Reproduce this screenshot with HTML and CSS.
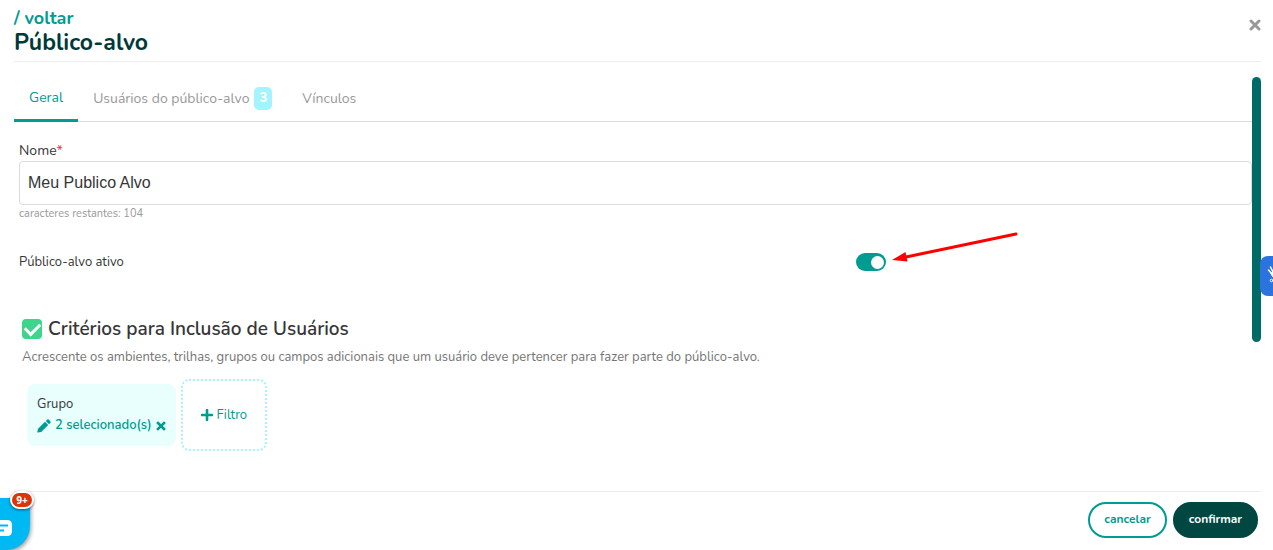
FILE: index.html
```html
<!DOCTYPE html>
<html lang="pt-br">
<head>
    <meta charset="UTF-8">
    <meta name="viewport" content="width=device-width, initial-scale=1.0">
    <title>Público-alvo</title>
    <link rel="stylesheet" href="styles.css">
</head>
<body>
    <div class="modal">
        <header class="modal-header">
            <div>
                <a class="voltar" href="#">/ voltar</a>
                <h1>Público-alvo</h1>
            </div>
            <button class="fechar" type="button" aria-label="Fechar">
                <svg width="12" height="12" viewBox="0 0 12 12"><path d="M2 2l8 8M10 2l-8 8" stroke="currentColor" stroke-width="3" stroke-linecap="round"/></svg>
            </button>
        </header>

        <div class="modal-body">
            <main class="conteudo">
                <nav class="abas">
                    <a class="aba ativa" href="#geral">Geral</a>
                    <a class="aba" href="#usuarios">Usuários do público-alvo <span class="contador">3</span></a>
                    <a class="aba" href="#vinculos">Vínculos</a>
                </nav>

                <form class="formulario" id="geral">
                    <label class="rotulo" for="nome">Nome<span class="obrigatorio">*</span></label>
                    <input class="campo" type="text" id="nome" value="Meu Publico Alvo">
                    <small class="ajuda">caracteres restantes: 104</small>

                    <div class="linha-ativo">
                        <label for="ativo">Público-alvo ativo</label>
                        <div class="controle">
                            <input class="toggle" type="checkbox" id="ativo" checked>
                            <svg class="seta" width="128" height="34" viewBox="0 0 128 34">
                                <path d="M124 4L14 27" stroke="#fe0000" stroke-width="3" stroke-linecap="round"/>
                                <path d="M0 30L13.500 22L15.500 31.500z" fill="#fe0000"/>
                            </svg>
                        </div>
                    </div>

                    <section class="criterios">
                        <div class="titulo">
                            <input class="marcador" type="checkbox" id="criterios" checked>
                            <h2><label for="criterios">Critérios para Inclusão de Usuários</label></h2>
                        </div>
                        <p>Acrescente os ambientes, trilhas, grupos ou campos adicionais que um usuário deve pertencer para fazer parte do público-alvo.</p>
                        <div class="filtros">
                            <div class="filtro">
                                <span>Grupo</span>
                                <div class="selecao">
                                    <button class="editar" type="button">
                                        <svg width="14" height="14" viewBox="0 0 14 14"><path fill="currentColor" d="M8 2.800L11.200 6L4.200 13L.8 13.600Q.2 13.700.3 13.100L1 9.800zM8.800 2L10.300.6Q11 0 11.700.6L13.400 2.300Q14 3 13.400 3.700L12 5.200z"/></svg>
                                        2 selecionado(s)
                                    </button>
                                    <button class="remover" type="button" aria-label="Remover">
                                        <svg width="10" height="10" viewBox="0 0 10 10"><path d="M2 2l6 6M8 2l-6 6" stroke="currentColor" stroke-width="2.600" stroke-linecap="square"/></svg>
                                    </button>
                                </div>
                            </div>
                            <button class="adicionar" type="button">
                                <svg width="12" height="12" viewBox="0 0 12 12"><path d="M6 1v10M1 6h10" stroke="currentColor" stroke-width="2.600" stroke-linecap="round"/></svg>
                                Filtro
                            </button>
                        </div>
                    </section>
                </form>
            </main>
            <div class="rolagem"></div>
        </div>

        <footer class="modal-footer">
            <button class="btn btn-cancelar" type="button">cancelar</button>
            <button class="btn btn-confirmar" type="button">confirmar</button>
        </footer>
    </div>

    <button class="chat" type="button" aria-label="Chat">
        <svg width="13" height="20" viewBox="0 0 13 20"><path d="M0 1h7q5 0 5 5v6q0 5-5 5H0z" fill="#fff"/><path d="M0 6.500h8M0 11.500h4" stroke="#00b9f2" stroke-width="2"/></svg>
        <span class="notificacoes">9+</span>
    </button>

    <button class="libras" type="button" aria-label="Libras">
        <svg width="20" height="24" viewBox="0 0 20 24" fill="none" stroke="#fff" stroke-linecap="round"><path d="M5 10L1.500 6M6 8L3.500 3M8 8L7 1" stroke-width="1.500"/><path d="M4 9L8 7L12 12L10 16L6 13z" fill="#fff"/><circle cx="4.500" cy="16.500" r="1.300"/></svg>
    </button>
</body>
</html>
```

FILE: styles.css
```css
* {
    box-sizing: border-box;
}
body {
    margin: 0;
    font-family: Nunito, 'Open Sans', sans-serif;
    font-size: 14px;
    color: #363636;
    background: #fff;
    overflow: hidden;
}
button {
    font-family: inherit;
    padding: 0;
    border: none;
    background: none;
    color: #009b91;
    cursor: pointer;
}
a {
    text-decoration: none;
}
svg {
    display: block;
    fill: none;
    flex-shrink: 0;
}
.modal {
    display: flex;
    flex-direction: column;
    height: 100vh;
    padding: 0 12px 0 14px;
}
.modal-header {
    display: flex;
    justify-content: space-between;
    align-items: flex-start;
    padding: 6px 0;
    border-bottom: 1px solid #ededed;
}
.voltar {
    display: block;
    font-size: 18px;
    font-weight: 700;
    line-height: 24px;
    color: #009b91;
}
h1 {
    margin: 0;
    font-size: 23px;
    font-weight: 700;
    line-height: 25px;
    color: #003a38;
}
.fechar {
    margin-top: 13px;
    color: #999;
}
.modal-body {
    flex: 1;
    display: flex;
    min-height: 0;
    padding-top: 15px;
}
.conteudo {
    flex: 1;
}
.rolagem {
    width: 9px;
    height: 64%;
    border-radius: 5px;
    background: #006b66;
}

/* abas */
.abas {
    display: flex;
    height: 45px;
    border-bottom: 1px solid #dbdbdb;
}
.aba {
    display: flex;
    align-items: center;
    gap: 5px;
    height: 45px;
    padding: 0 15px 2px;
    color: #999;
}
.aba.ativa {
    color: #009b91;
    border-bottom: 3px solid #009b91;
}
.contador {
    padding: 0 5px;
    border-radius: 5px;
    background: #a3f4ff;
    color: #fff;
    font-size: 13px;
    font-weight: 800;
    line-height: 23px;
}

/* formulario */
.formulario {
    padding: 18px 0 0 5px;
}
.rotulo {
    display: block;
    line-height: 21px;
}
.obrigatorio {
    color: #ff1f4f;
}
.campo {
    display: block;
    width: 100%;
    height: 44px;
    padding: 0 8px;
    border: 1px solid #dbdbdb;
    border-radius: 4px;
    font-family: 'Liberation Sans', Arial, sans-serif;
    font-size: 16px;
    color: #363636;
}
.ajuda {
    display: block;
    font-size: 11px;
    line-height: 18px;
    color: #999;
}
.linha-ativo {
    display: grid;
    grid-template-columns: 2fr 1fr;
    align-items: center;
    margin-top: 30px;
    font-size: 13px;
    line-height: 18px;
}
.controle {
    position: relative;
    display: flex;
    padding-left: 15px;
}
.toggle {
    appearance: none;
    display: flex;
    justify-content: flex-end;
    align-items: center;
    width: 30px;
    height: 18px;
    margin: 0;
    padding: 0 2px;
    border-radius: 9px;
    background: #009b91;
}
.toggle::before {
    content: "";
    width: 13px;
    height: 13px;
    border-radius: 50%;
    background: #fff;
}
.seta {
    position: absolute;
    left: 51px;
    top: -23px;
}

/* criterios */
.criterios {
    margin-top: 46px;
    padding-left: 3px;
}
.titulo {
    display: flex;
    align-items: center;
    gap: 6px;
}
.marcador {
    appearance: none;
    width: 20px;
    height: 20px;
    margin: 0;
    border-radius: 4px;
    background: #3fd48b;
    display: grid;
    place-items: center;
}
.marcador::before {
    content: "";
    width: 12px;
    height: 7px;
    border-left: 3px solid #fff;
    border-bottom: 3px solid #fff;
    transform: rotate(-45deg) translate(1px, -1px);
}
h2 {
    margin: 0;
    font-size: 19px;
    font-weight: 600;
    line-height: 24px;
}
.criterios p {
    margin: 7px 0 13px;
    font-size: 13px;
    line-height: 18px;
    color: #757575;
}
.filtros {
    display: flex;
    align-items: center;
    gap: 5px;
    padding-left: 5px;
    font-size: 13px;
}
.filtro {
    height: 62px;
    padding: 10px;
    border-radius: 8px;
    background: #e8fffe;
    line-height: 21px;
}
.selecao,
.editar {
    display: flex;
    align-items: center;
    gap: 4px;
}
.editar {
    font-size: 13px;
    font-weight: 600;
    line-height: 21px;
}
.adicionar {
    display: flex;
    align-items: center;
    gap: 4px;
    height: 72px;
    padding: 0 18px;
    border: 2px dotted #a3f4ff;
    border-radius: 8px;
    font-size: 13px;
}

/* rodape */
.modal-footer {
    display: flex;
    justify-content: flex-end;
    gap: 6px;
    padding: 10px 3px 12px;
    border-top: 1px solid #ededed;
}
.btn {
    height: 36px;
    padding: 0 14px 2px;
    border: 2px solid #009b91;
    border-radius: 18px;
    font-size: 12px;
    font-weight: 700;
}
.btn-confirmar {
    border-color: #004742;
    background: #004742;
    color: #fff;
}

/* widgets flutuantes */
.chat {
    position: fixed;
    left: 0;
    bottom: 0;
    width: 30px;
    height: 52px;
    padding-top: 10px;
    border-radius: 0 0 24px 0;
    background: #00b9f2;
    box-shadow: 1px 2px 4px rgba(0, 0, 0, 0.4);
}
.notificacoes {
    position: absolute;
    left: 10px;
    top: -7px;
    width: 24px;
    border: 2px solid #fff;
    border-radius: 10px;
    background: #dd3409;
    box-shadow: 0 1px 3px rgba(0, 0, 0, 0.5);
    color: #fff;
    font-family: 'Noto Sans', sans-serif;
    font-size: 10px;
    font-weight: 800;
    line-height: 14px;
}
.libras {
    position: fixed;
    right: 0;
    top: 256px;
    width: 13px;
    height: 40px;
    padding-left: 7px;
    border-radius: 8px 0 0 8px;
    background: #2b73df;
    overflow: hidden;
}
```
